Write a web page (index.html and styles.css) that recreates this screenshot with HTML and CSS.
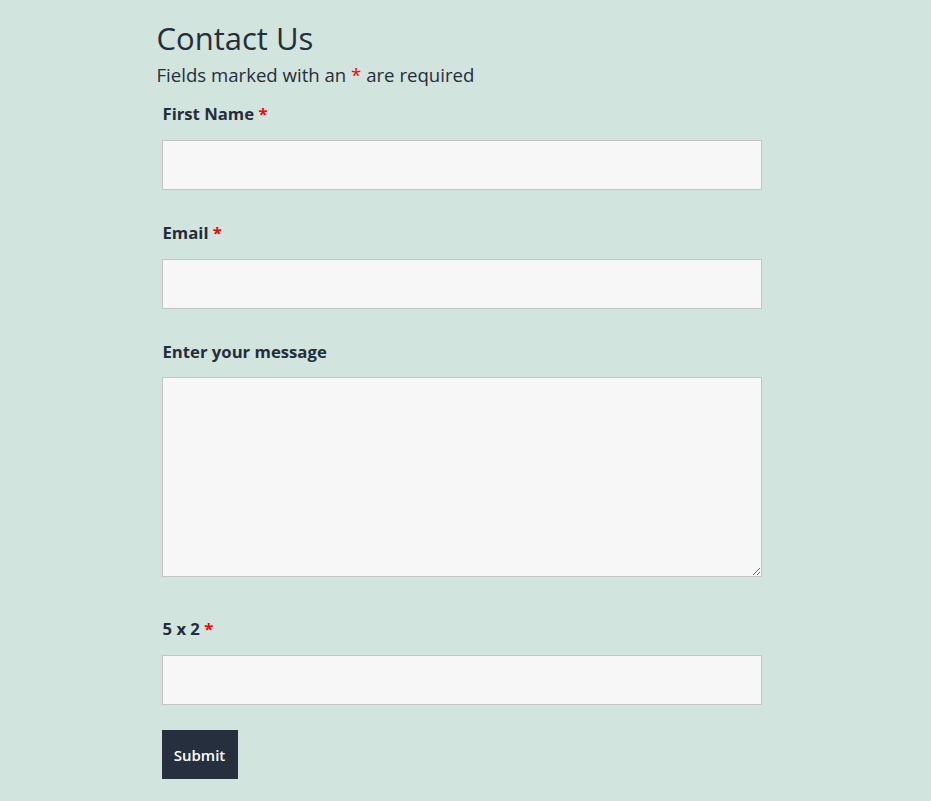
FILE: index.html
```html
<!DOCTYPE html>
<html lang="en">
<head>
<meta charset="UTF-8">
<meta name="viewport" content="width=device-width, initial-scale=1.0">
<title>Contact Us</title>
<link rel="stylesheet" href="styles.css">
</head>
<body>

<div class="container">
    <h2>Contact Us</h2>
    <p class="note">Fields marked with an <span class="req">*</span> are required</p>

    <form id="contactForm">
        <div class="field">
            <label for="fname">First Name <span class="req">*</span></label>
            <input type="text" id="fname" name="fname">
        </div>
        <div class="field">
            <label for="email">Email <span class="req">*</span></label>
            <input type="email" id="email" name="email">
        </div>
        <div class="field field-message">
            <label for="message">Enter your message</label>
            <textarea id="message" name="message"></textarea>
        </div>
        <div class="field field-last">
            <label for="captcha">5 x 2 <span class="req">*</span></label>
            <input type="text" id="captcha" name="captcha">
        </div>
        <input type="submit" value="Submit">
    </form>
</div>

</body>
</html>
```

FILE: styles.css
```css
body {
    font-family: "Open Sans", "Noto Sans", sans-serif;
    margin: 0;
    padding: 0;
    background-color: #d2e4de;
    color: #252d3a;
}

.container {
    width: 618px;
    margin: 0 auto;
    padding-top: 18px;
}

h2 {
    font-size: 31px;
    font-weight: 400;
    margin: 0;
    line-height: 40px;
}

.note {
    font-size: 18.6px;
    margin: 3px 0 13px;
    line-height: 28px;
}

.req {
    color: #ff0000;
}

form {
    padding-left: 5px;
}

.field {
    margin-bottom: 31px;
}

.field-message {
    margin-bottom: 40px;
}

.field-message label {
    margin-bottom: 13px;
}

.field-last {
    margin-bottom: 25px;
}

label {
    display: block;
    font-weight: 700;
    font-size: 16.7px;
    line-height: 24px;
    padding-left: 1px;
    margin-bottom: 14px;
}

input[type="text"],
input[type="email"],
textarea {
    display: block;
    width: 600px;
    height: 50px;
    padding: 10px;
    border: 1px solid #c4c4c4;
    border-radius: 0;
    background-color: #f7f7f7;
    box-sizing: border-box;
    font-family: inherit;
    font-size: 16px;
    margin: 0;
}

textarea {
    height: 200px;
}

input[type="submit"] {
    background-color: #262f3d;
    color: #fff;
    font-family: inherit;
    font-size: 15px;
    font-weight: 600;
    padding: 0 12px;
    height: 49px;
    width: 76px;
    border: none;
    border-radius: 0;
    cursor: pointer;
}
```
